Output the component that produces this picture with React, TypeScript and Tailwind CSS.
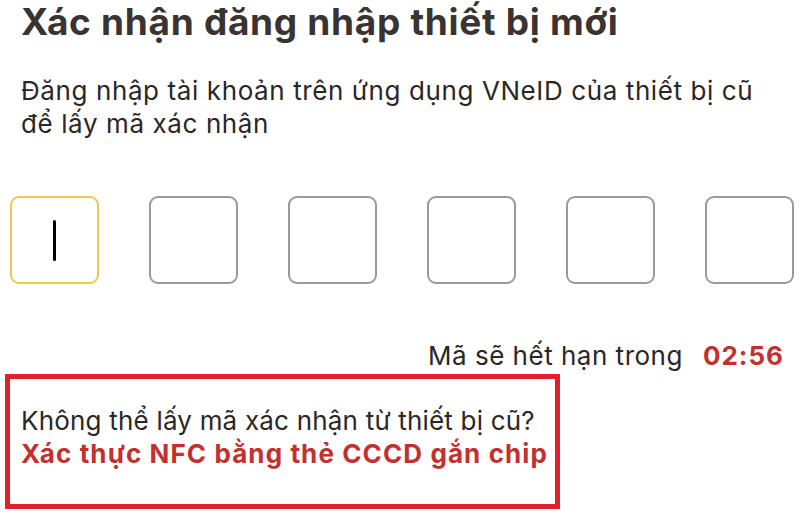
import * as React from 'react';

const CODE_LENGTH = 6;

function CodeBox({ active }: { active: boolean }) {
  return (
    <div
      className={`flex h-[88px] w-[89px] items-center justify-center rounded-[9px] border-2 ${
        active ? 'border-[#ecc94b]' : 'border-[#9a9a9a]'
      }`}
    >
      {active && <span className="ml-[-1px] h-[41px] w-[3px] rounded-full bg-black" />}
    </div>
  );
}

export default function App() {
  return (
    <div
      className="h-[515px] w-[800px] overflow-hidden bg-white text-[#2b2727]"
      style={{ fontFamily: 'Inter, "Noto Sans", sans-serif' }}
    >
      <h1 className="pl-[21px] text-[37px] font-bold leading-[44px] tracking-[0.7px] text-[#3a3333]">
        Xác nhận đăng nhập thiết bị mới
      </h1>

      <p className="mt-[30px] pl-[21px] text-[26px] leading-[33px] tracking-[0.6px]">
        Đăng nhập tài khoản trên ứng dụng VNeID của thiết bị cũ
        <br />
        để lấy mã xác nhận
      </p>

      <div className="mt-[56px] flex gap-[50px] pl-[10px]">
        {Array.from({ length: CODE_LENGTH }).map((_, i) => (
          <CodeBox key={i} active={i === 0} />
        ))}
      </div>

      <div className="mt-[55px] flex justify-end gap-[20px] pr-[16px] text-[26px] leading-[33px]">
        <span className="tracking-[0.5px]">Mã sẽ hết hạn trong</span>
        <span className="font-bold tracking-[1px] text-[#c3302e]">02:56</span>
      </div>

      <div className="ml-[5px] mt-[2px] h-[135px] w-[555px] border-[5px] border-[#e2202b] pl-[11px] pt-[25px]">
        <p className="text-[26px] leading-[33px] tracking-[0.2px]">
          Không thể lấy mã xác nhận từ thiết bị cũ?
        </p>
        <p className="text-[26px] font-bold leading-[33px] tracking-[1.1px] text-[#c3302e]">
          Xác thực NFC bằng thẻ CCCD gắn chip
        </p>
      </div>
    </div>
  );
}
